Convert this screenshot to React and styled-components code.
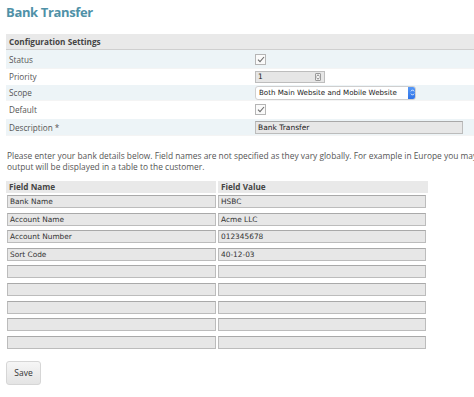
import React from 'react'
import styled, { createGlobalStyle } from 'styled-components'

const GlobalStyle = createGlobalStyle`
  html, body {
    margin: 0;
    padding: 0;
    background: #fff;
    overflow: hidden;
  }
  body {
    font-family: "Open Sans", "Liberation Sans", sans-serif;
    color: #444;
  }
`

const Page = styled.div`
  padding: 4px 0 0 6px;
  width: 640px;
`

const Title = styled.h2`
  margin: 0 0 14px 0;
  font-size: 13px;
  font-weight: 700;
  letter-spacing: -0.35px;
  color: #4f91a7;
  line-height: 16px;
`

const ConfigTable = styled.div`
  display: grid;
  grid-template-columns: 248px 1fr;
  font-size: 8.2px;
  color: #555;
`

const HeadCell = styled.div`
  grid-column: 1 / -1;
  height: 15px;
  line-height: 15px;
  padding-left: 3px;
  background: #e9e9e9;
  border-bottom: 1px solid #cfcfcf;
  font-weight: 700;
  color: #444;
`

const Row = styled.div`
  display: contents;
`

const Cell = styled.div`
  display: flex;
  align-items: center;
  height: ${p => p.h || 16}px;
  background: ${p => (p.alt ? '#edf4f7' : '#fff')};
  padding-left: ${p => p.pad || 0}px;
  border-bottom: 1px solid ${p => (p.alt ? '#f4f4f4' : '#fff')};
`

const Check = styled.span`
  width: 11px;
  height: 11px;
  border: 1px solid #b5b5b5;
  background: #fafafa;
  display: inline-flex;
  align-items: center;
  justify-content: center;
  box-sizing: border-box;
`

const NumberBox = styled.div`
  width: 70px;
  height: 12px;
  box-sizing: border-box;
  border: 1px solid #bdbdbd;
  background: #e6e6e6;
  display: flex;
  align-items: center;
  justify-content: space-between;
  padding: 0 3px 0 2px;
  font-family: "DejaVu Sans", "Liberation Sans", sans-serif;
  font-size: 7.5px;
  color: #222;
`

const Spinner = styled.span`
  width: 6px;
  height: 8px;
  border: 1px solid #9a9a9a;
  border-radius: 1px;
  background: #f2f2f2;
  box-sizing: border-box;
  display: flex;
  align-items: center;
  justify-content: center;
`

const Select = styled.div`
  width: 161px;
  height: 14px;
  box-sizing: border-box;
  border: 1px solid #cfcfcf;
  border-radius: 3px;
  background: #fff;
  display: flex;
  align-items: center;
  justify-content: space-between;
  padding-left: 3px;
  font-family: "DejaVu Sans", "Liberation Sans", sans-serif;
  font-size: 7.1px;
  color: #222;
  overflow: hidden;
  white-space: nowrap;
`

const SelectArrow = styled.span`
  width: 8px;
  height: 14px;
  margin-right: -1px;
  border-radius: 0 3px 3px 0;
  background: linear-gradient(#5a9cf8, #2b6fe6);
  display: flex;
  align-items: center;
  justify-content: center;
`

const TextBox = styled.div`
  width: ${p => p.w}px;
  height: 13px;
  box-sizing: border-box;
  border: 1px solid #bcbcbc;
  border-top-color: #a9a9a9;
  background: #e7e7e7;
  padding-left: 2px;
  display: flex;
  align-items: center;
  font-family: "DejaVu Sans", "Liberation Sans", sans-serif;
  font-size: 7.5px;
  color: #222;
  white-space: nowrap;
  overflow: hidden;
`

const Intro = styled.p`
  margin: 15px 0 9px 1px;
  white-space: nowrap;
  font-size: 8.4px;
  line-height: 10.5px;
  color: #555;
`

const FieldTable = styled.div`
  display: grid;
  grid-template-columns: 210px 210px;
  column-gap: 2px;
  row-gap: 4.6px;
  width: 422px;
`

const FieldHead = styled.div`
  height: 12px;
  line-height: 12px;
  padding-left: 3px;
  background: #e9e9e9;
  font-size: 8.2px;
  font-weight: 700;
  color: #444;
  margin-bottom: -2.6px;
`

const FieldInput = styled(TextBox)`
  margin-left: ${p => (p.first ? 1 : 0)}px;
  width: ${p => (p.first ? 209 : 208)}px;
  font-size: 7.4px;
  color: #333;
`

const SaveButton = styled.button`
  margin-top: 12px;
  width: 35px;
  height: 24px;
  border: 1px solid #d6d6d6;
  border-radius: 3px;
  background: linear-gradient(#f6f6f6, #e4e4e4);
  font-family: "Open Sans", "Liberation Sans", sans-serif;
  font-size: 8.5px;
  color: #333;
  padding: 0;
`

const Tick = () => (
  <svg width="8" height="7" viewBox="0 0 8 7">
    <path d="M1 3.6 L3 5.6 L7 1" fill="none" stroke="#6d6d6d" strokeWidth="1.1" />
  </svg>
)

const fields = [
  ['Bank Name', 'HSBC'],
  ['Account Name', 'Acme LLC'],
  ['Account Number', '012345678'],
  ['Sort Code', '40-12-03'],
  ['', ''],
  ['', ''],
  ['', ''],
  ['', ''],
  ['', '']
]

export default function App() {
  return (
    <Page>
      <GlobalStyle />
      <Title>Bank Transfer</Title>

      <ConfigTable>
        <HeadCell>Configuration Settings</HeadCell>
        <Row>
          <Cell alt h={18} pad={3}>Status</Cell>
          <Cell alt h={18} pad={1}><Check><Tick /></Check></Cell>
        </Row>
        <Row>
          <Cell h={15} pad={3}>Priority</Cell>
          <Cell h={15} pad={1}>
            <NumberBox>
              1
              <Spinner>
                <svg width="4" height="6" viewBox="0 0 4 6">
                  <path d="M0.5 2.2 L2 0.8 L3.5 2.2 M0.5 3.8 L2 5.2 L3.5 3.8" fill="none" stroke="#555" strokeWidth="0.7" />
                </svg>
              </Spinner>
            </NumberBox>
          </Cell>
        </Row>
        <Row>
          <Cell alt h={15} pad={3}>Scope</Cell>
          <Cell alt h={15} pad={1}>
            <Select>
              Both Main Website and Mobile Website
              <SelectArrow>
                <svg width="5" height="9" viewBox="0 0 5 9">
                  <path d="M1 3.3 L2.5 1.8 L4 3.3 M1 5.7 L2.5 7.2 L4 5.7" fill="none" stroke="#fff" strokeWidth="0.9" />
                </svg>
              </SelectArrow>
            </Select>
          </Cell>
        </Row>
        <Row>
          <Cell h={17} pad={3}>Default</Cell>
          <Cell h={17} pad={1}><Check><Tick /></Check></Cell>
        </Row>
        <Row>
          <Cell alt h={16} pad={3}>Description *</Cell>
          <Cell alt h={16} pad={1}><TextBox w={208}>Bank Transfer</TextBox></Cell>
        </Row>
      </ConfigTable>

      <Intro>
        Please enter your bank details below. Field names are not specified as they vary globally. For example in Europe you may want to use IBAN and BIC. The
        <br />
        output will be displayed in a table to the customer.
      </Intro>

      <FieldTable>
        <FieldHead>Field Name</FieldHead>
        <FieldHead>Field Value</FieldHead>
        {fields.map(([name, value], i) => (
          <React.Fragment key={i}>
            <FieldInput first>{name}</FieldInput>
            <FieldInput>{value}</FieldInput>
          </React.Fragment>
        ))}
      </FieldTable>

      <SaveButton>Save</SaveButton>
    </Page>
  )
}
